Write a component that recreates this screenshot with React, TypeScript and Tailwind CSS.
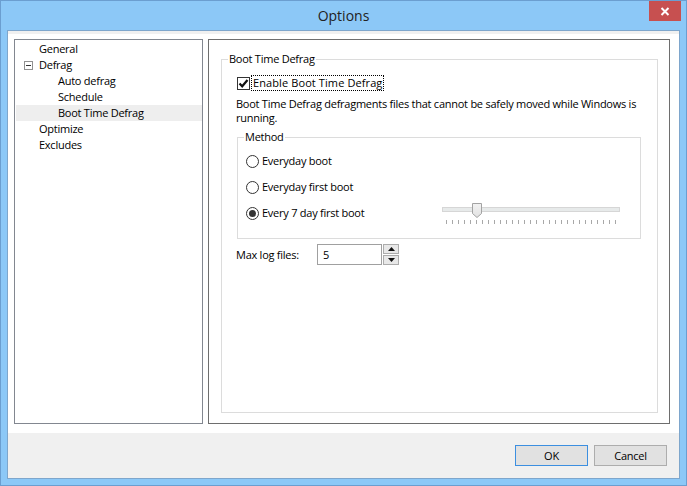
import React from "react";

type TreeItem = { label: string; level: number; selected?: boolean; expander?: boolean };

const treeItems: TreeItem[] = [
  { label: "General", level: 0 },
  { label: "Defrag", level: 0, expander: true },
  { label: "Auto defrag", level: 1 },
  { label: "Schedule", level: 1 },
  { label: "Boot Time Defrag", level: 1, selected: true },
  { label: "Optimize", level: 0 },
  { label: "Excludes", level: 0 },
];

function Radio({ label, checked }: { label: string; checked?: boolean }) {
  return (
    <div className="flex items-center">
      <span className="w-[13px] h-[13px] rounded-full border border-[#333333] bg-white flex items-center justify-center shrink-0">
        {checked && <span className="w-[7px] h-[7px] rounded-full bg-[#333333]" />}
      </span>
      <span className="ml-[3px] leading-[16px]">{label}</span>
    </div>
  );
}

function Slider() {
  const ticks = Array.from({ length: 29 });
  return (
    <div className="relative w-[178px] h-[22px]">
      <div className="absolute left-0 top-[5px] w-[178px] h-[5px] border border-[#d6d6d6] bg-[#e7eaea]" />
      <svg className="absolute left-[30px] top-[1px]" width="10" height="15" viewBox="0 0 10 15">
        <defs>
          <linearGradient id="thumbg" x1="0" y1="0" x2="0" y2="1">
            <stop offset="0" stopColor="#f2f2f2" />
            <stop offset="1" stopColor="#e2e2e2" />
          </linearGradient>
        </defs>
        <path d="M0.5 0.5 H9.5 V10.5 L5 14.5 L0.5 10.5 Z" fill="url(#thumbg)" stroke="#a3a3a3" strokeWidth="1" />
      </svg>
      <div className="absolute left-[4px] top-[18px] w-[170px] h-[4px] flex justify-between">
        {ticks.map((_, i) => (
          <span key={i} className="w-px h-[4px] bg-[#a8a8a8]" />
        ))}
      </div>
    </div>
  );
}

export default function App() {
  return (
    <div className="w-[687px] h-[486px] border border-[#6b9ed0] bg-[#8cc8f7] flex flex-col font-['Open_Sans',sans-serif] text-[11px] tracking-[-0.25px] text-black select-none overflow-hidden">
      {/* Title bar */}
      <div className="h-[29px] shrink-0 grid grid-cols-[1fr_auto_1fr]">
        <div />
        <div className="text-[14px] tracking-normal leading-[29px] text-[#222222]">Options</div>
        <div className="flex justify-end items-start">
          <div className="w-[32px] h-[20px] mr-[5px] bg-[#c75050] flex items-center justify-center">
            <svg width="10" height="9" viewBox="0 0 10 9">
              <path d="M1.5 1 L8.5 8 M8.5 1 L1.5 8" stroke="white" strokeWidth="2" />
            </svg>
          </div>
        </div>
      </div>

      {/* Client */}
      <div className="flex-1 mx-[6px] mb-[6px] border border-[#7ea6cc] bg-white flex flex-col min-h-0">
        <div className="h-[3px] shrink-0 bg-[#f0f0f0]" />
        <div className="flex-1 flex pt-[5px] pl-[6px] pr-[9px] pb-[9px] gap-[5px] min-h-0">
          {/* Tree */}
          <div className="w-[189px] shrink-0 border border-[#828790] bg-white pt-px">
            {treeItems.map((it) => (
              <div
                key={it.label}
                className={`ml-px h-[16px] flex items-center relative ${it.selected ? "bg-[#eeeeee]" : ""} ${
                  it.level === 0 ? "pl-[23px]" : "pl-[42px]"
                }`}
              >
                {it.expander && (
                  <span className="absolute left-[8px] top-[4px] w-[9px] h-[9px] border border-[#919191] bg-white flex items-center justify-center">
                    <span className="w-[5px] h-px bg-[#333333]" />
                  </span>
                )}
                <span className="leading-[16px]">{it.label}</span>
              </div>
            ))}
          </div>

          {/* Right panel */}
          <div className="flex-1 border border-[#6e6e6e] bg-white flex min-w-0">
            <fieldset className="flex-1 mt-[11px] ml-[12px] mr-[11px] mb-[10px] border border-[#dcdcdc] p-0 m-0 min-w-0">
              <legend className="ml-[6px] px-[1px] leading-[16px]">Boot Time Defrag</legend>
              <div className="flex flex-col">
                <div className="mt-[8px] ml-[15px] h-[16px] flex items-center">
                  <span className="w-[13px] h-[13px] border border-[#333333] bg-white flex items-center justify-center shrink-0">
                    <svg width="11" height="11" viewBox="0 0 11 11">
                      <path d="M1.5 5.5 L4.2 8.3 L9.5 2" fill="none" stroke="#111111" strokeWidth="2.2" />
                    </svg>
                  </span>
                  <span className="ml-px px-px border border-dotted border-black leading-[14px] tracking-[0.1px]">
                    Enable Boot Time Defrag
                  </span>
                </div>

                <div className="mt-[6px] ml-[14px] leading-[14px] whitespace-nowrap">
                  Boot Time Defrag defragments files that cannot be safely moved while Windows is
                  <br />
                  running.
                </div>

                <fieldset className="mt-[4px] ml-[15px] mr-[16px] border border-[#dcdcdc] p-0 min-w-0">
                  <legend className="ml-[6px] px-[1px] leading-[16px]">Method</legend>
                  <div className="pt-[3px] pb-[12px] pl-[8px] pr-[20px] flex flex-col">
                    <div className="h-[26px] flex items-center">
                      <Radio label="Everyday boot" />
                    </div>
                    <div className="h-[26px] flex items-center">
                      <Radio label="Everyday first boot" />
                    </div>
                    <div className="h-[26px] flex items-center justify-between">
                      <Radio label="Every 7 day first boot" checked />
                      <Slider />
                    </div>
                  </div>
                </fieldset>

                <div className="mt-[5px] ml-[14px] h-[21px] flex items-center">
                  <span className="w-[81px] shrink-0 leading-[16px]">Max log files:</span>
                  <div className="w-[65px] h-[21px] border border-[#a0a0a0] bg-white flex items-center pl-[5px]">
                    <span className="leading-[16px]">5</span>
                  </div>
                  <div className="ml-px w-[16px] h-[21px] flex flex-col justify-between">
                    <div className="h-[10px] border border-[#acacac] bg-[#e8e8e8] flex items-center justify-center">
                      <svg width="7" height="4" viewBox="0 0 7 4">
                        <path d="M0 4 L3.5 0 L7 4 Z" fill="#111111" />
                      </svg>
                    </div>
                    <div className="h-[10px] border border-[#acacac] bg-[#e8e8e8] flex items-center justify-center">
                      <svg width="7" height="4" viewBox="0 0 7 4">
                        <path d="M0 0 L7 0 L3.5 4 Z" fill="#111111" />
                      </svg>
                    </div>
                  </div>
                </div>
              </div>
            </fieldset>
          </div>
        </div>

        {/* Bottom bar */}
        <div className="h-[45px] shrink-0 bg-[#f0f0f0] flex justify-end items-start pt-[12px] pr-[12px] gap-[6px]">
          <div className="w-[73px] h-[21px] border border-[#3c8fe0] bg-[#e1e1e1] flex items-center justify-center leading-[16px]">
            OK
          </div>
          <div className="w-[73px] h-[21px] border border-[#adadad] bg-[#e1e1e1] flex items-center justify-center leading-[16px]">
            Cancel
          </div>
        </div>
      </div>
    </div>
  );
}
